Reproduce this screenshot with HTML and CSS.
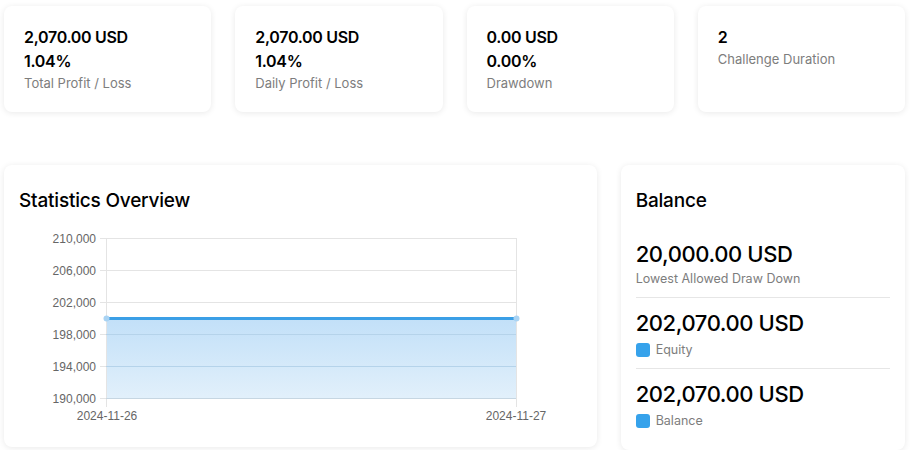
FILE: index.html
```html
<!DOCTYPE html>
<html>
<head>
<meta charset="utf-8">
<link rel="stylesheet" href="styles.css">
</head>
<body>
<div class="page">
  <div class="stats-row">
    <div class="card stat">
      <div class="stat-value">2,070.00 USD</div>
      <div class="stat-value">1.04%</div>
      <div class="stat-label">Total Profit / Loss</div>
    </div>
    <div class="card stat">
      <div class="stat-value">2,070.00 USD</div>
      <div class="stat-value">1.04%</div>
      <div class="stat-label">Daily Profit / Loss</div>
    </div>
    <div class="card stat">
      <div class="stat-value">0.00 USD</div>
      <div class="stat-value">0.00%</div>
      <div class="stat-label">Drawdown</div>
    </div>
    <div class="card stat">
      <div class="stat-value">2</div>
      <div class="stat-label">Challenge Duration</div>
    </div>
  </div>

  <div class="main-row">
    <div class="card panel chart-card">
      <h5 class="panel-title">Statistics Overview</h5>
      <svg class="chart" width="562" height="204" viewBox="0 0 562 204">
        <defs>
          <linearGradient id="fillGrad" x1="0" y1="0" x2="0" y2="1">
            <stop offset="0" stop-color="#c2e0f8"/>
            <stop offset="1" stop-color="#e2f0fb"/>
          </linearGradient>
        </defs>
        <rect x="87" y="91" width="410" height="80" fill="url(#fillGrad)"/>
        <g stroke="#e4e4e4" stroke-width="1">
          <line x1="81" y1="10.5" x2="497" y2="10.5"/>
          <line x1="81" y1="42.5" x2="497" y2="42.5"/>
          <line x1="81" y1="74.5" x2="497" y2="74.5"/>
          <line x1="81" y1="106.5" x2="87" y2="106.5"/>
          <line x1="81" y1="138.5" x2="87" y2="138.5"/>
          <line x1="81" y1="170.5" x2="87" y2="170.5"/>
          <line x1="497.5" y1="10" x2="497.5" y2="179"/>
          <line x1="87.5" y1="10" x2="87.5" y2="179"/>
        </g>
        <g stroke="#b5d3ea" stroke-width="1">
          <line x1="87" y1="106.5" x2="497" y2="106.5"/>
          <line x1="87" y1="138.5" x2="497" y2="138.5"/>
        </g>
        <line x1="87" y1="170.5" x2="497" y2="170.5" stroke="#c6d6e2" stroke-width="1"/>
        <line x1="87" y1="90.5" x2="497" y2="90.5" stroke="#3b9fe6" stroke-width="3"/>
        <circle cx="87.5" cy="90.5" r="3" fill="#a9d3f3"/>
        <circle cx="497.5" cy="90.5" r="3" fill="#a9d3f3"/>
        <g class="axis-text" text-anchor="end">
          <text x="77" y="14.5">210,000</text>
          <text x="77" y="46.5">206,000</text>
          <text x="77" y="78.5">202,000</text>
          <text x="77" y="110.5">198,000</text>
          <text x="77" y="142.5">194,000</text>
          <text x="77" y="174.5">190,000</text>
        </g>
        <g class="axis-text" text-anchor="middle">
          <text x="88" y="192">2024-11-26</text>
          <text x="497" y="192">2024-11-27</text>
        </g>
      </svg>
    </div>

    <div class="card panel balance-card">
      <h5 class="panel-title">Balance</h5>
      <div class="bal-list">
        <div class="bal-item">
          <div class="bal-value">20,000.00 USD</div>
          <div class="bal-label">Lowest Allowed Draw Down</div>
        </div>
        <div class="bal-item">
          <div class="bal-value">202,070.00 USD</div>
          <div class="bal-label legend"><span class="swatch"></span>Equity</div>
        </div>
        <div class="bal-item">
          <div class="bal-value">202,070.00 USD</div>
          <div class="bal-label legend"><span class="swatch"></span>Balance</div>
        </div>
      </div>
    </div>
  </div>
</div>
</body>
</html>
```

FILE: styles.css
```css
* { box-sizing: border-box; }

body {
  margin: 0;
  background: #ffffff;
  font-family: Inter, "Open Sans", sans-serif;
  color: #000000;
}

.page {
  padding: 6px 6px 0 4px;
}

.card {
  background: #ffffff;
  border-radius: 8px;
  box-shadow: 0 1px 6px rgba(0, 0, 0, 0.09);
}

.stats-row {
  display: grid;
  grid-template-columns: repeat(4, 1fr);
  gap: 24px;
}

.stat {
  padding: 19px 20px;
}

.stat-value {
  font-size: 16px;
  font-weight: 600;
  line-height: 24px;
  letter-spacing: -0.3px;
  color: #000;
}

.stat-label {
  font-size: 13px;
  line-height: 20px;
  color: #7d7d7d;
}

.main-row {
  margin-top: 53px;
  display: grid;
  grid-template-columns: calc((100% + 24px) * 2 / 3 - 24px) 1fr;
  gap: 24px;
  align-items: start;
}

.panel {
  padding: 24px 15px 15px;
}

.panel-title {
  margin: 0;
  font-size: 19px;
  font-weight: 500;
  line-height: 24px;
  letter-spacing: -0.2px;
  color: #000;
}

.chart {
  display: block;
  margin-top: 15px;
}

.axis-text text {
  font-family: "Liberation Sans", Arial, sans-serif;
  font-size: 12px;
  fill: #666666;
}

.balance-card {
  padding-bottom: 21px;
}

.bal-list {
  margin-top: 26px;
}

.bal-item {
  padding: 10px 0;
  border-bottom: 1px solid #e6e6e6;
}

.bal-item:first-child {
  padding-top: 0;
  padding-bottom: 8px;
}

.bal-item:last-child {
  border-bottom: none;
  padding-bottom: 0;
}

.bal-value {
  font-size: 22px;
  font-weight: 500;
  line-height: 30px;
  letter-spacing: -0.4px;
  color: #000;
}

.bal-label {
  display: flex;
  align-items: center;
  gap: 6px;
  font-size: 12.5px;
  line-height: 20px;
  color: #7d7d7d;
}

.bal-item .legend {
  margin-top: 2px;
  margin-bottom: -2px;
}

.swatch {
  width: 14px;
  height: 14px;
  border-radius: 3px;
  background: #36a2eb;
  flex: none;
}
```
